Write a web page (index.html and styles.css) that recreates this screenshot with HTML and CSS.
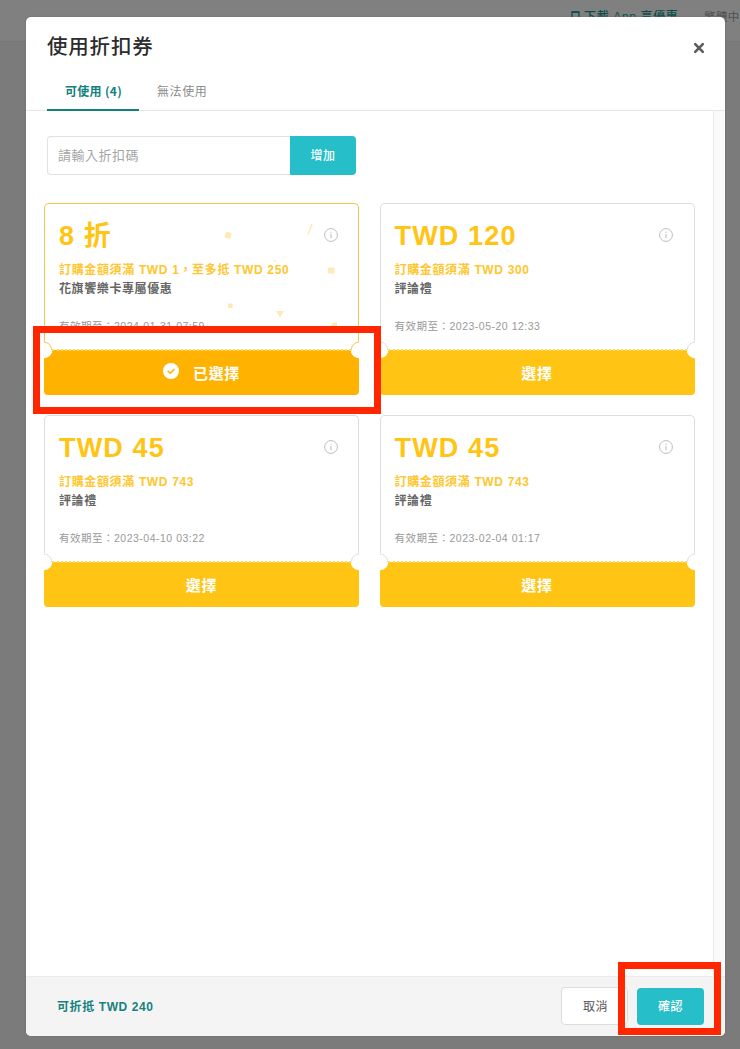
FILE: index.html
```
<!DOCTYPE html>
<html lang="zh-Hant">
<head>
<meta charset="utf-8">
<title>使用折扣券</title>
<link rel="stylesheet" href="styles.css">
</head>
<body>
<svg class="defs" width="0" height="0">
  <symbol id="info" viewBox="0 0 14 14"><circle cx="7" cy="7" r="6.4" fill="none" stroke="#bdbdbd" stroke-width="1"/><path d="M7 5.9V10.2M7 3.7V4.8" stroke="#b9b9b9" stroke-width="1"/></symbol>
  <symbol id="notch" viewBox="0 0 9 18"><path d="M0 .5H1A8.3 8.3 0 0 1 1 17.2H0Z" fill="#fff"/><path d="M.8 1A8 8 0 0 1 8.7 9" fill="none" stroke="currentColor"/></symbol>
</svg>
<header class="topbar">
  <span class="app"><svg width="9" height="12" viewBox="0 0 9 12"><path d="M1 1H8V11H1Z" fill="none" stroke="#0c4f4a" stroke-width="1.4"/><path d="M1 1.2H8" stroke="#0c4f4a" stroke-width="1.6"/></svg>下載 App 享優惠</span>
  <span class="lang">繁體中</span>
</header>
<main class="modal">
  <div class="head">
    <div class="title-row">
      <h1>使用折扣券</h1>
      <svg class="close" width="12" height="12" viewBox="0 0 12 12"><path d="M2.2 2.2L9.8 9.8M9.8 2.2L2.2 9.8" stroke="#5c5c5c" stroke-width="2.6" stroke-linecap="round"/></svg>
    </div>
    <nav class="tabs"><span class="tab active">可使用 (4)</span><span class="tab">無法使用</span></nav>
  </div>
  <div class="body">
    <div class="content">
      <div class="code"><div class="input">請輸入折扣碼</div><div class="add">增加</div></div>
      <div class="grid">
        <article class="card selected">
          <div class="info">
            <svg class="confetti" width="313" height="146" viewBox="45 204 313 146" fill="#ffe9b8"><path d="M226 231.5L231.5 233 230.5 239 224.500 237.500Z"/><path d="M312 224L308 235" stroke="#ffe9b8" stroke-width="1.3"/><rect x="328" y="267.500" width="6.500" height="6" rx="1"/><rect x="228" y="303.500" width="4.500" height="4.500"/><path d="M276 311H284L280 317.500Z"/><path d="M332 323L337 322V327H331Z"/><circle cx="275" cy="261" r="1"/></svg>
            <h2>8 折</h2><svg class="i"><use href="#info"/></svg>
            <p class="cond">訂購金額須滿 TWD 1，至多抵 TWD 250</p><p class="name">花旗饗樂卡專屬優惠</p><p class="date">有效期至：2024-01-31 07:59</p>
          </div>
          <div class="pick"><svg class="check" width="16" height="16" viewBox="0 0 16 16"><circle cx="8" cy="8" r="8" fill="#fff"/><path d="M4.700 7.900L7.200 10.300L11.500 5.900" fill="none" stroke="#ffb300" stroke-width="1.500"/></svg>已選擇</div>
          <svg class="notch left"><use href="#notch"/></svg><svg class="notch right"><use href="#notch"/></svg>
        </article>
        <article class="card">
          <div class="info"><h2>TWD 120</h2><svg class="i"><use href="#info"/></svg>
            <p class="cond">訂購金額須滿 TWD 300</p><p class="name">評論禮</p><p class="date">有效期至：2023-05-20 12:33</p></div>
          <div class="pick">選擇</div>
          <svg class="notch left"><use href="#notch"/></svg><svg class="notch right"><use href="#notch"/></svg>
        </article>
        <article class="card">
          <div class="info"><h2>TWD 45</h2><svg class="i"><use href="#info"/></svg>
            <p class="cond">訂購金額須滿 TWD 743</p><p class="name">評論禮</p><p class="date">有效期至：2023-04-10 03:22</p></div>
          <div class="pick">選擇</div>
          <svg class="notch left"><use href="#notch"/></svg><svg class="notch right"><use href="#notch"/></svg>
        </article>
        <article class="card">
          <div class="info"><h2>TWD 45</h2><svg class="i"><use href="#info"/></svg>
            <p class="cond">訂購金額須滿 TWD 743</p><p class="name">評論禮</p><p class="date">有效期至：2023-02-04 01:17</p></div>
          <div class="pick">選擇</div>
          <svg class="notch left"><use href="#notch"/></svg><svg class="notch right"><use href="#notch"/></svg>
        </article>
      </div>
    </div>
    <div class="track"></div>
  </div>
  <footer class="foot"><span class="sum">可折抵 TWD 240</span><span class="btn cancel">取消</span><span class="btn ok">確認</span></footer>
</main>
<div class="mark mark-selected"></div>
<div class="mark mark-confirm"></div>
</body>
</html>
```
FILE: styles.css
```
* { box-sizing: border-box; }
body { margin: 0; width: 740px; height: 1049px; overflow: hidden; position: relative; background: #7b7b7b; font-family: "Liberation Sans", "Noto Sans CJK TC", sans-serif; letter-spacing: .6px; white-space: nowrap; }
h1, h2, p { margin: 0; }
.defs { position: absolute; }
.topbar { height: 42px; background: #808080; border-bottom: 1px solid #777; padding: 8px 0 0 571px; display: flex; align-items: flex-start; gap: 26px; font-size: 11.500px; line-height: 18px; color: #505050; letter-spacing: .4px; }
.app { color: #0c4f4a; display: flex; align-items: center; gap: 4px; font-size: 12px; letter-spacing: .65px; font-weight: 500; width: 107px; flex: none; }
.app svg { flex: none; }
.modal { position: absolute; left: 26px; top: 17px; width: 699px; height: 1019px; background: #fff; border-radius: 5px; overflow: hidden; display: flex; flex-direction: column; box-shadow: 0 0 2px #666; }
.head { height: 94px; border-bottom: 1px solid #e7e7e7; padding: 0 20px 0 21px; flex: none; }
.title-row { height: 59px; display: flex; align-items: center; justify-content: space-between; }
h1 { font-size: 20.5px; font-weight: 500; line-height: 30px; color: #2c2c2c; letter-spacing: .8px; font-family: "Noto Sans CJK TC", sans-serif; margin-bottom: 4px; }
.close { margin-top: 2px; }
.tabs { display: flex; height: 35px; font-family: "Noto Sans CJK TC", sans-serif; }
.tab { font-size: 12px; line-height: 30px; color: #8c8c8c; padding: 0 18px; letter-spacing: .6px; }
.tab.active { width: 92px; color: #12817c; font-weight: 700; border-bottom: 2px solid #12817c; height: 35px; letter-spacing: .3px; }
.body { flex: 1; display: flex; }
.content { width: 687px; padding: 25px 0 0 18px; }
.track { width: 12px; background: #fafafa; border-left: 1px solid #ebebeb; }
.code { display: flex; width: 310px; height: 39px; margin-left: 3px; font-size: 12px; }
.input { width: 243px; border: 1px solid #e1e1e1; border-right: 0; border-radius: 4px 0 0 4px; padding-left: 10px; font-size: 13px; line-height: 38px; color: #a5a5a5; letter-spacing: .5px; }
.add { width: 66px; background: #26bec9; color: #fff; border-radius: 0 4px 4px 0; text-align: center; line-height: 41px; font-weight: 500; }
.grid { display: grid; grid-template-columns: 315px 315px; column-gap: 20.500px; row-gap: 20px; margin-top: 28px; }
.card { height: 192px; position: relative; color: #dedede; display: flex; flex-direction: column; }
.info { height: 147px; border: 1px solid #dedede; border-bottom: 0; border-radius: 5px 5px 0 0; padding: 15px 0 0 14px; position: relative; }
h2 { font-size: 27px; line-height: 34px; font-weight: 700; letter-spacing: 1.15px; color: #ffc414; position: relative; }
.i { position: absolute; width: 14px; height: 14px; right: 20.500px; top: 23.500px; }
.cond { margin-top: 7px; font-size: 12px; line-height: 20px; font-weight: 700; color: #ffc62e; letter-spacing: .65px; position: relative; }
.name { font-size: 12px; line-height: 19px; font-weight: 700; color: #666; position: relative; }
.date { margin-top: 19px; font-size: 10.500px; line-height: 16px; color: #999; letter-spacing: .5px; position: relative; }
.pick { flex: 1; background: #ffc414; border-radius: 0 0 4px 4px; color: #fff; font-size: 15px; font-weight: 700; display: flex; align-items: center; justify-content: center; position: relative; letter-spacing: .7px; padding-bottom: 1px; }
.pick::before { content: ""; position: absolute; left: 8px; right: 8px; top: -1px; border-top: 2px dotted #ffd95e; }
.notch { position: absolute; width: 9px; height: 18px; top: 138px; left: -1px; }
.notch.right { left: auto; right: -1px; transform: scaleX(-1); }
.selected { color: #f5c453; }
.selected .info { border-color: #f5c453; }
.selected .pick { background: #ffb300; }
.confetti { position: absolute; left: 0; top: 0; }
.check { margin-right: 14px; position: relative; top: -1px; }
.foot { height: 60px; flex: none; background: #f4f4f4; border-top: 1px solid #ececec; padding: 10px 21px 0 31px; display: flex; font-size: 12px; }
.sum { flex: 1; line-height: 41px; color: #16827e; font-weight: 700; }
.btn { width: 67px; height: 38px; line-height: 38px; text-align: center; border-radius: 4px; }
.cancel { background: #fff; border: 1px solid #ddd; color: #555; margin-right: 9px; padding-left: 2px; }
.ok { background: #26bec9; color: #fff; font-weight: 500; margin-top: 1px; height: 37px; }
.mark { position: absolute; border: 7px solid #ff2600; }
.mark-selected { left: 33px; top: 326px; width: 348px; height: 88px; }
.mark-confirm { left: 618px; top: 962px; width: 103px; height: 73px; }
```
